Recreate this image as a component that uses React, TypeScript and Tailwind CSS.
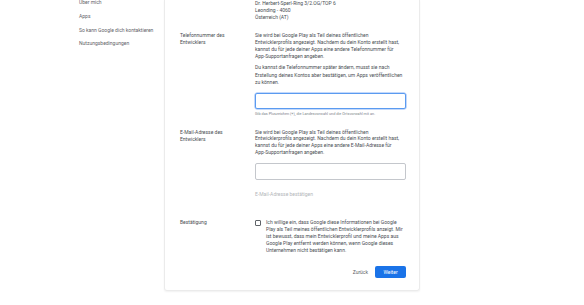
const FONT = { fontFamily: "Roboto, 'Liberation Sans', sans-serif" };

const NAV_ITEMS = ["Über mich", "Apps", "So kann Google dich kontaktieren", "Nutzungsbedingungen"];

function Lines({ lines, className }: { lines: string[]; className?: string }) {
  return (
    <p className={className}>
      {lines.map((line, i) => (
        <span key={i} className="block whitespace-nowrap">
          {line}
        </span>
      ))}
    </p>
  );
}

function Row({ label, children, className }: { label?: string[]; children: React.ReactNode; className?: string }) {
  return (
    <div className={`grid grid-cols-[75px_151px] ${className ?? ""}`}>
      <div>{label && <Lines lines={label} />}</div>
      <div>{children}</div>
    </div>
  );
}

export default function App() {
  return (
    <div
      className="flex h-[305px] w-[584px] overflow-hidden bg-white text-[5px] leading-[7px] text-[#4a4e53]"
      style={FONT}
    >
      <nav className="w-[164px] shrink-0 pl-[79px]">
        <ul className="-mt-[1px] flex flex-col gap-[6.8px] text-[#5f6368]">
          {NAV_ITEMS.map((item) => (
            <li key={item} className="leading-[7px]">
              {item}
            </li>
          ))}
        </ul>
      </nav>

      <section className="h-[291px] w-[256px] shrink-0 rounded-b-[3px] border border-t-0 border-[#ebebeb] pl-[15px] pr-[14px] pb-[13px] shadow-[0_1px_2px_rgba(0,0,0,0.06)]">
        <Row>
          <Lines lines={["Dr. Herbert-Sperl-Ring 3/2.OG/TOP 6", "Leonding - 4060", "Österreich (AT)"]} />
        </Row>

        <Row label={["Telefonnummer des", "Entwicklers"]} className="mt-[10.5px]">
          <div className="leading-[7.33px]">
            <Lines
              lines={[
                "Sie wird bei Google Play als Teil deines öffentlichen",
                "Entwicklerprofils angezeigt. Nachdem du dein Konto erstellt hast,",
                "kannst du für jede deiner Apps eine andere Telefonnummer für",
                "App-Supportanfragen angeben.",
              ]}
            />
            <Lines
              className="mt-[3.4px]"
              lines={[
                "Du kannst die Telefonnummer später ändern, musst sie nach",
                "Erstellung deines Kontos aber bestätigen, um Apps veröffentlichen",
                "zu können.",
              ]}
            />
          </div>
          <div className="mt-[7px] h-[16px] w-[151px] rounded-[2px] border border-[#5b9bf0] shadow-[0_0_0_0.5px_#8ab4f8]" />
          <p className="mt-[2px] whitespace-nowrap text-[3.8px] leading-[5px] text-[#80868b]">
            Gib das Pluszeichen (+), die Landesvorwahl und die Ortsvorwahl mit an.
          </p>
        </Row>

        <Row label={["E-Mail-Adresse des", "Entwicklers"]} className="mt-[12.5px]">
          <Lines
            className="leading-[6.8px]"
            lines={[
              "Sie wird bei Google Play als Teil deines öffentlichen",
              "Entwicklerprofils angezeigt. Nachdem du dein Konto erstellt hast,",
              "kannst du für jede deiner Apps eine andere E-Mail-Adresse für",
              "App-Supportanfragen angeben.",
            ]}
          />
          <div className="mt-[7px] h-[17px] w-[151px] rounded-[2px] border border-[#c4c7cc]" />
          <p className="mt-[11px] text-[#b3b6ba]">E-Mail-Adresse bestätigen</p>
        </Row>

        <Row label={["Bestätigung"]} className="mt-[21px]">
          <div className="flex gap-[5px]">
            <div className="mt-[1px] h-[6px] w-[6px] shrink-0 rounded-[1px] border border-[#5f6368]" />
            <Lines
              className="leading-[6.9px]"
              lines={[
                "Ich willige ein, dass Google diese Informationen bei Google",
                "Play als Teil meines öffentlichen Entwicklerprofils anzeigt. Mir",
                "ist bewusst, dass mein Entwicklerprofil und meine Apps aus",
                "Google Play entfernt werden können, wenn Google dieses",
                "Unternehmen nicht bestätigen kann.",
              ]}
            />
          </div>
          <div className="mt-[13px] flex items-center justify-end gap-[6px]">
            <button className="px-[1px] text-[#5f6368]">Zurück</button>
            <button className="h-[12px] w-[31px] rounded-[2px] bg-[#1a73e8] text-white">Weiter</button>
          </div>
        </Row>
      </section>
    </div>
  );
}
